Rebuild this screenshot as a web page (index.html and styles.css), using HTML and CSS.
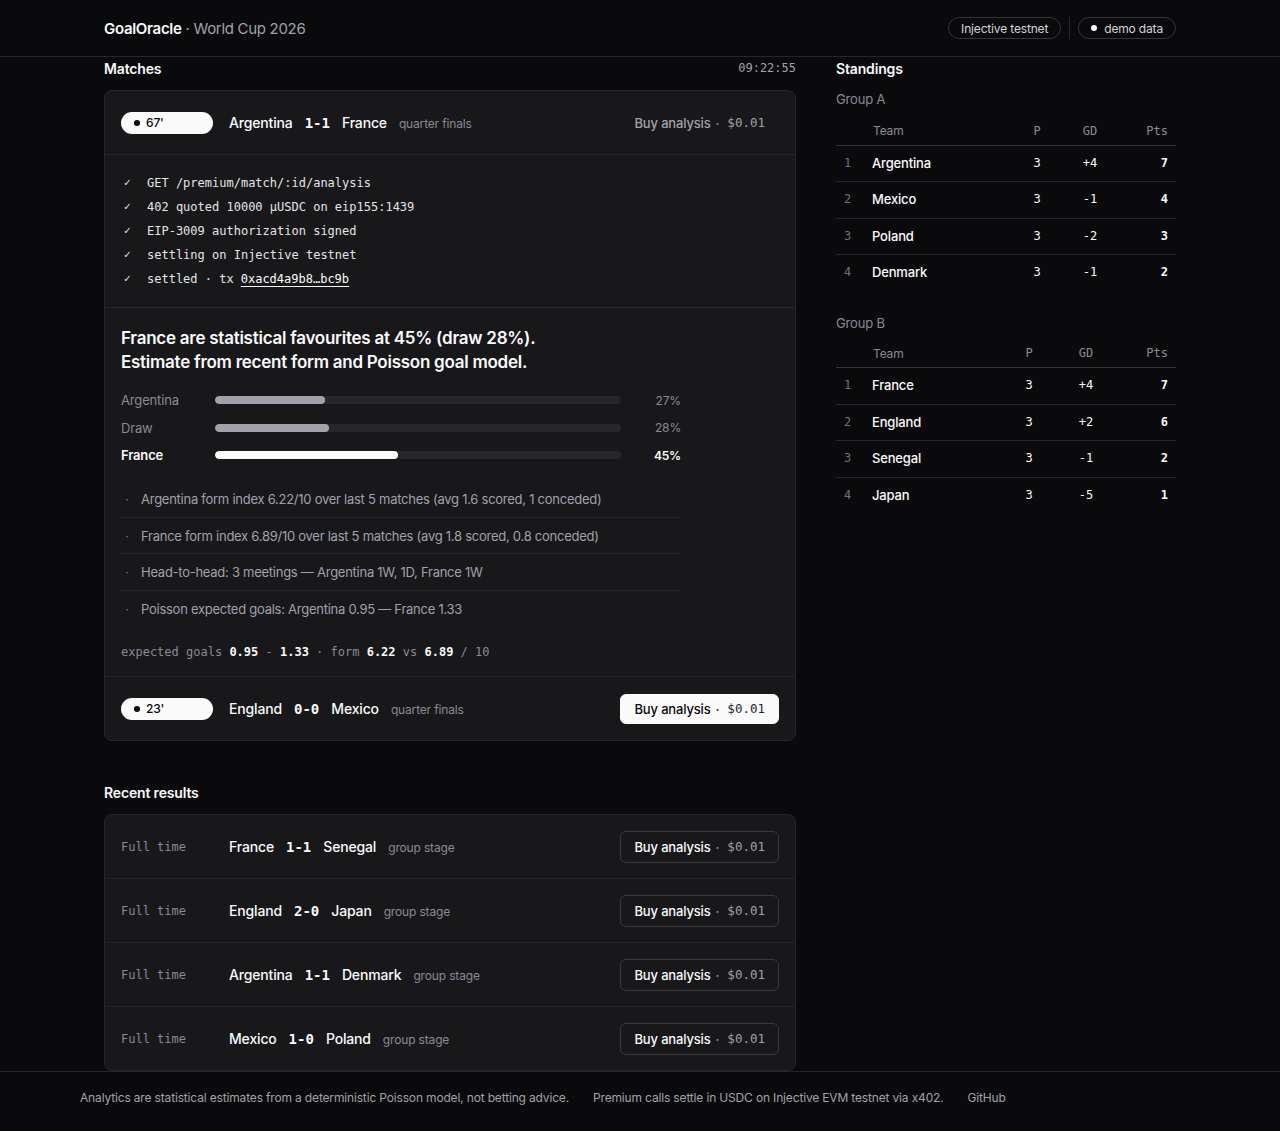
FILE: index.html
```html
<!DOCTYPE html>
<html lang="en">
<head>
  <meta charset="UTF-8">
  <meta name="viewport" content="width=device-width, initial-scale=1.0">
  <title>GoalOracle · World Cup 2026</title>
  <link rel="stylesheet" href="styles.css">
</head>
<body>
  <header class="topbar">
    <div class="topbar-inner">
      <div class="brand"><strong>GoalOracle</strong> <span>· World Cup 2026</span></div>
      <div class="badges">
        <span class="badge">Injective testnet</span>
        <span class="badge-sep"></span>
        <span class="badge"><i class="dot dot-white"></i>demo data</span>
      </div>
    </div>
  </header>

  <main class="layout">
    <div class="col-main">
      <section>
        <div class="section-head">
          <h2>Matches</h2>
          <span class="clock mono">09:22:55</span>
        </div>
        <div class="card">
          <div class="match-row">
            <span class="live-pill"><i class="dot"></i>67'</span>
            <div class="teams">
              <span class="team">Argentina</span>
              <span class="score mono">1-1</span>
              <span class="team">France</span>
              <span class="stage">quarter finals</span>
            </div>
            <button type="button" class="buy buy-open">Buy analysis <span class="sep">·</span> <span class="price mono">$0.01</span></button>
          </div>

          <ul class="steps mono">
            <li><span class="tick">✓</span>GET /premium/match/:id/analysis</li>
            <li><span class="tick">✓</span>402 quoted 10000 µUSDC on eip155:1439</li>
            <li><span class="tick">✓</span>EIP-3009 authorization signed</li>
            <li><span class="tick">✓</span>settling on Injective testnet</li>
            <li><span class="tick">✓</span>settled · tx <a href="#">0xacd4a9b8…bc9b</a></li>
          </ul>

          <div class="analysis">
            <h3>France are statistical favourites at 45% (draw 28%).<br>Estimate from recent form and Poisson goal model.</h3>
            <div class="bars">
              <span class="bar-label">Argentina</span>
              <div class="track"><div class="fill" style="width: 27%"></div></div>
              <span class="pct">27%</span>

              <span class="bar-label">Draw</span>
              <div class="track"><div class="fill" style="width: 28%"></div></div>
              <span class="pct">28%</span>

              <span class="bar-label top">France</span>
              <div class="track"><div class="fill fill-top" style="width: 45%"></div></div>
              <span class="pct top">45%</span>
            </div>
            <ul class="notes">
              <li>Argentina form index 6.22/10 over last 5 matches (avg 1.6 scored, 1 conceded)</li>
              <li>France form index 6.89/10 over last 5 matches (avg 1.8 scored, 0.8 conceded)</li>
              <li>Head-to-head: 3 meetings — Argentina 1W, 1D, France 1W</li>
              <li>Poisson expected goals: Argentina 0.95 — France 1.33</li>
            </ul>
            <p class="summary mono">expected goals <b>0.95</b> - <b>1.33</b> · form <b>6.22</b> vs <b>6.89</b> / 10</p>
          </div>

          <div class="match-row">
            <span class="live-pill"><i class="dot"></i>23'</span>
            <div class="teams">
              <span class="team">England</span>
              <span class="score mono">0-0</span>
              <span class="team">Mexico</span>
              <span class="stage">quarter finals</span>
            </div>
            <button type="button" class="buy buy-primary">Buy analysis <span class="sep">·</span> <span class="price mono">$0.01</span></button>
          </div>
        </div>
      </section>

      <section class="recent">
        <div class="section-head">
          <h2>Recent results</h2>
        </div>
        <div class="card">
          <div class="match-row">
            <span class="status mono">Full time</span>
            <div class="teams">
              <span class="team">France</span>
              <span class="score mono">1-1</span>
              <span class="team">Senegal</span>
              <span class="stage">group stage</span>
            </div>
            <button type="button" class="buy">Buy analysis <span class="sep">·</span> <span class="price mono">$0.01</span></button>
          </div>
          <div class="match-row">
            <span class="status mono">Full time</span>
            <div class="teams">
              <span class="team">England</span>
              <span class="score mono">2-0</span>
              <span class="team">Japan</span>
              <span class="stage">group stage</span>
            </div>
            <button type="button" class="buy">Buy analysis <span class="sep">·</span> <span class="price mono">$0.01</span></button>
          </div>
          <div class="match-row">
            <span class="status mono">Full time</span>
            <div class="teams">
              <span class="team">Argentina</span>
              <span class="score mono">1-1</span>
              <span class="team">Denmark</span>
              <span class="stage">group stage</span>
            </div>
            <button type="button" class="buy">Buy analysis <span class="sep">·</span> <span class="price mono">$0.01</span></button>
          </div>
          <div class="match-row">
            <span class="status mono">Full time</span>
            <div class="teams">
              <span class="team">Mexico</span>
              <span class="score mono">1-0</span>
              <span class="team">Poland</span>
              <span class="stage">group stage</span>
            </div>
            <button type="button" class="buy">Buy analysis <span class="sep">·</span> <span class="price mono">$0.01</span></button>
          </div>
        </div>
      </section>
    </div>

    <aside class="col-side">
      <div class="section-head">
        <h2>Standings</h2>
      </div>

      <h4 class="group-name">Group A</h4>
      <table class="standings">
        <thead>
          <tr><th class="rank"></th><th class="name">Team</th><th class="p mono">P</th><th class="gd mono">GD</th><th class="pts mono">Pts</th></tr>
        </thead>
        <tbody>
          <tr><td class="rank mono">1</td><td class="name">Argentina</td><td class="p mono">3</td><td class="gd mono">+4</td><td class="pts mono">7</td></tr>
          <tr><td class="rank mono">2</td><td class="name">Mexico</td><td class="p mono">3</td><td class="gd mono">-1</td><td class="pts mono">4</td></tr>
          <tr><td class="rank mono">3</td><td class="name">Poland</td><td class="p mono">3</td><td class="gd mono">-2</td><td class="pts mono">3</td></tr>
          <tr><td class="rank mono">4</td><td class="name">Denmark</td><td class="p mono">3</td><td class="gd mono">-1</td><td class="pts mono">2</td></tr>
        </tbody>
      </table>

      <h4 class="group-name">Group B</h4>
      <table class="standings group-b">
        <thead>
          <tr><th class="rank"></th><th class="name">Team</th><th class="p mono">P</th><th class="gd mono">GD</th><th class="pts mono">Pts</th></tr>
        </thead>
        <tbody>
          <tr><td class="rank mono">1</td><td class="name">France</td><td class="p mono">3</td><td class="gd mono">+4</td><td class="pts mono">7</td></tr>
          <tr><td class="rank mono">2</td><td class="name">England</td><td class="p mono">3</td><td class="gd mono">+2</td><td class="pts mono">6</td></tr>
          <tr><td class="rank mono">3</td><td class="name">Senegal</td><td class="p mono">3</td><td class="gd mono">-1</td><td class="pts mono">2</td></tr>
          <tr><td class="rank mono">4</td><td class="name">Japan</td><td class="p mono">3</td><td class="gd mono">-5</td><td class="pts mono">1</td></tr>
        </tbody>
      </table>
    </aside>
  </main>

  <footer class="site-footer">
    <span>Analytics are statistical estimates from a deterministic Poisson model, not betting advice.</span>
    <span>Premium calls settle in USDC on Injective EVM testnet via x402.</span>
    <a href="#">GitHub</a>
  </footer>
</body>
</html>
```

FILE: styles.css
```css
* {
  box-sizing: border-box;
}
html {
  font-family: 'Inter', 'Noto Sans', sans-serif;
  letter-spacing: -0.01em;
}
body {
  margin: 0;
  background: #0a0a0c;
  color: #fafafa;
  font-size: 14px;
}
ul {
  margin: 0;
  padding: 0;
  list-style: none;
}
h2, h3, h4, p {
  margin: 0;
}
button {
  font: inherit;
  letter-spacing: inherit;
}
.mono {
  font-family: 'DejaVu Sans Mono', 'Liberation Mono', monospace;
  letter-spacing: 0;
}

/* top bar */
.topbar {
  border-bottom: 1px solid #27272a;
}
.topbar-inner {
  width: 1072px;
  margin: 0 auto;
  height: 56px;
  display: flex;
  align-items: center;
  justify-content: space-between;
}
.brand {
  font-size: 15px;
  letter-spacing: -0.02em;
}
.brand strong {
  font-weight: 600;
}
.brand span {
  color: #a1a1aa;
}
.badges {
  display: flex;
  align-items: center;
  gap: 8px;
}
.badge {
  display: inline-flex;
  align-items: center;
  gap: 7px;
  height: 22px;
  padding: 0 12px;
  border: 1px solid #333338;
  border-radius: 999px;
  font-size: 12px;
  color: #d4d4d8;
}
.badge-sep {
  width: 1px;
  height: 22px;
  background: #27272a;
}
.dot {
  display: inline-block;
  width: 6px;
  height: 6px;
  border-radius: 50%;
  background: #09090b;
}
.dot-white {
  background: #fafafa;
}

/* layout */
.layout {
  width: 1072px;
  margin: 0 auto;
  padding-top: 1px;
  display: grid;
  grid-template-columns: 692px 340px;
  gap: 40px;
  align-items: start;
}
.section-head {
  display: flex;
  justify-content: space-between;
  align-items: center;
  height: 20px;
  margin-bottom: 12px;
}
.section-head h2 {
  font-size: 14px;
  font-weight: 600;
}
.clock {
  font-size: 12px;
  color: #a1a1aa;
}
.recent {
  margin-top: 41px;
}

.card {
  background: #18181b;
  border: 1px solid #27272a;
  border-radius: 8px;
  overflow: hidden;
}

/* match rows */
.match-row {
  height: 64px;
  padding: 0 16px;
  display: flex;
  align-items: center;
  gap: 16px;
  border-top: 1px solid #232326;
}
.match-row:first-child {
  border-top: none;
  height: 63px;
}
.live-pill {
  width: 92px;
  height: 22px;
  padding-left: 13px;
  display: inline-flex;
  align-items: center;
  gap: 6px;
  background: #fafafa;
  color: #09090b;
  border-radius: 999px;
  font-size: 12px;
  font-weight: 500;
  flex-shrink: 0;
}
.status {
  width: 92px;
  flex-shrink: 0;
  font-size: 12px;
  color: #8a8a93;
}
.teams {
  flex: 1;
  display: flex;
  align-items: baseline;
  gap: 10px;
}
.team {
  font-size: 14px;
  font-weight: 500;
}
.score {
  font-weight: 700;
  font-size: 14px;
  margin: 0 2px;
}
.stage {
  font-size: 12px;
  color: #8a8a93;
  margin-left: 2px;
}

.buy {
  height: 32px;
  padding: 0 13px;
  display: inline-flex;
  align-items: center;
  gap: 5px;
  background: transparent;
  color: #fafafa;
  border: 1px solid #3a3a40;
  border-radius: 6px;
  font-size: 13px;
  font-weight: 500;
  cursor: pointer;
}
.buy .sep {
  color: #8a8a93;
}
.buy .price {
  font-size: 12.5px;
  color: #a1a1aa;
  margin-left: 3px;
}
.buy-open {
  border-color: transparent;
  color: #a1a1aa;
}
.buy-primary {
  height: 30px;
  background: #fafafa;
  color: #09090b;
  border-color: #fafafa;
}
.buy-primary .sep,
.buy-primary .price {
  color: #27272a;
}

/* payment steps */
.steps {
  border-top: 1px solid #27272a;
  padding: 16px 16px;
  font-size: 12px;
  line-height: 24px;
  color: #e4e4e7;
}
.steps li {
  display: flex;
}
.tick {
  width: 26px;
  padding-left: 3px;
  font-size: 11px;
}
.steps a {
  color: #fafafa;
  text-decoration: underline;
  text-underline-offset: 3px;
  margin-left: 7px;
}

/* analysis */
.analysis {
  border-top: 1px solid #27272a;
  padding: 18px 16px 15px;
}
.analysis h3 {
  font-size: 17px;
  font-weight: 600;
  line-height: 24px;
  letter-spacing: -0.015em;
}
.bars {
  width: 560px;
  margin-top: 16px;
  display: grid;
  grid-template-columns: 94px 406px 60px;
  row-gap: 7.5px;
  align-items: center;
}
.bar-label {
  font-size: 13px;
  line-height: 20px;
  color: #8a8a93;
}
.bar-label.top {
  color: #fafafa;
  font-weight: 600;
}
.track {
  height: 8px;
  background: #27272a;
  border-radius: 4px;
  overflow: hidden;
}
.fill {
  height: 100%;
  background: #a1a1aa;
  border-radius: 4px;
}
.fill-top {
  background: #fafafa;
}
.pct {
  font-size: 12px;
  text-align: right;
  color: #8a8a93;
}
.pct.top {
  color: #fafafa;
  font-weight: 600;
}
.notes {
  width: 560px;
  margin-top: 16px;
}
.notes li {
  padding: 8px 0 7.5px 20px;
  font-size: 13px;
  line-height: 20px;
  letter-spacing: -0.02em;
  color: #a1a1aa;
  border-top: 1px solid #27272a;
  position: relative;
}
.notes li:first-child {
  border-top: none;
}
.notes li::before {
  content: "·";
  position: absolute;
  left: 4px;
  color: #71717a;
}
.summary {
  margin-top: 17px;
  font-size: 12px;
  line-height: 18px;
  color: #8a8a93;
}
.summary b {
  color: #fafafa;
}

/* standings */
.group-name {
  font-size: 13px;
  font-weight: 400;
  color: #8a8a93;
  line-height: 18px;
  margin: 0 0 9px;
}
.standings + .group-name {
  margin-top: 23px;
  margin-bottom: 8px;
}
.standings {
  width: 100%;
  border-collapse: collapse;
}
.standings th {
  height: 28px;
  font-size: 12px;
  font-weight: 400;
  color: #8a8a93;
  border-bottom: 1px solid #333338;
}
.standings td {
  padding: 8px 0;
  line-height: 19.5px;
  font-size: 13px;
  border-bottom: 1px solid #27272a;
}
.standings tr:last-child td {
  border-bottom: none;
}
.standings .rank {
  width: 36px;
  padding-left: 8px;
  text-align: left;
  font-size: 12px;
  color: #71717a;
}
.standings .name {
  text-align: left;
  font-weight: 500;
}
.standings th.name {
  font-weight: 400;
}
.standings .p {
  width: 62px;
  text-align: center;
  font-size: 12px;
}
.standings .gd {
  width: 44px;
  text-align: center;
  font-size: 12px;
}
.group-b .gd {
  width: 52px;
}
.standings .pts {
  width: 64px;
  padding-right: 8px;
  text-align: right;
  font-size: 12px;
}
.standings td.pts {
  font-weight: 700;
}

/* footer */
.site-footer {
  border-top: 1px solid #27272a;
  padding: 17px 80px 25px;
  display: flex;
  gap: 24px;
  font-size: 12px;
  line-height: 18px;
  color: #a1a1aa;
}
.site-footer a {
  color: #a1a1aa;
  text-decoration: none;
}
```
